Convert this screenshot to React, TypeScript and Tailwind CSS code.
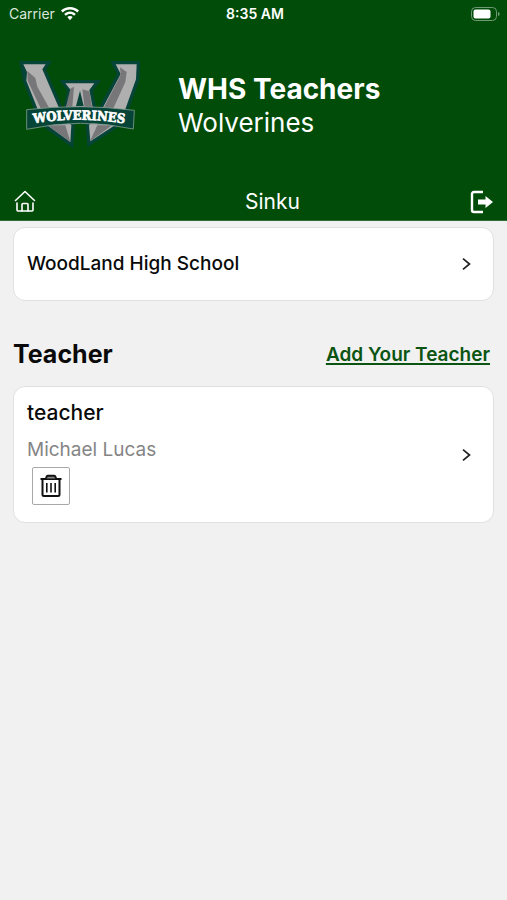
import type { ReactNode } from "react";

function WifiIcon() {
  return (
    <svg viewBox="0 0 18 14" className="h-[14px] w-[18px]" fill="#fff" aria-hidden="true">
      <path d="M9 0C5.500 0 2.400 1.300 0 3.600L1.700 5.400C3.600 3.500 6.200 2.500 9 2.500s5.400 1 7.300 2.900L18 3.600C15.600 1.300 12.500 0 9 0Z" />
      <path d="M9 4.500c-2.300 0-4.300.9-5.800 2.400l1.700 1.800C6 7.600 7.400 7 9 7s3 .6 4.100 1.700l1.700-1.800C13.300 5.400 11.300 4.500 9 4.500Z" />
      <path d="M9 9c-1.100 0-2 .4-2.700 1.100L9 13.300l2.700-3.200C11 9.400 10.100 9 9 9Z" />
    </svg>
  );
}

function BatteryIcon() {
  return (
    <svg viewBox="0 0 31 16" className="h-4 w-[31px]" fill="none" aria-hidden="true">
      <rect x="1.500" y="1.500" width="25" height="13" rx="4" stroke="#6f9a74" />
      <rect x="3.500" y="3.500" width="17" height="9" rx="2" fill="#fff" />
      <path d="M28 6c1.200.3 1.600 1 1.600 2s-.4 1.700-1.600 2Z" fill="#6f9a74" />
    </svg>
  );
}

function WolverinesLogo() {
  return (
    <svg viewBox="0 0 420 315" className="h-[105px] w-[140px]" role="img" aria-label="Wolverines">
      {/* outline behind the letter */}
      <g fill="#064438" stroke="#064438" strokeWidth="20" strokeLinejoin="miter">
        <path d="M40 43H107L97 58L148 176L184 226L181 276L112 226L84 180L49 92Z" />
        <path d="M317 43H380L378 88L333 214L241 274L237 226L280 170L332 72Z" />
        <path d="M168 100H253L238 120L250 182H169L182 120Z" />
      </g>

      <path fill="#b0afb0" d="M40 43H107L97 58L148 176L184 226L181 276L112 226L84 180L49 92L51 66Z" />
      <path fill="#777678" d="M52 63L76 84L82 110L121 180L96 184L53 92Z" />
      <path fill="#777678" d="M113 226L181 276L166 226Z" />
      <path fill="#b0afb0" d="M317 43H380L378 88L333 214L241 274L237 226L280 170L332 72Z" />
      <path fill="#777678" d="M330 52L350 66L346 96L306 184H276L332 74Z" />
      <path fill="#777678" d="M240 274L262 226H306Z" />
      <path fill="#b0afb0" d="M166 100H253L238 120L250 182H169L182 120Z" />
      <path fill="#777678" d="M181 116L192 110L186 182H165Z" />
      <path fill="#777678" d="M217 118L238 124L248 182H225Z" />
      <path fill="#064438" d="M210 122L221 168H198Z" />
      <path fill="#004c08" d="M200 228H220L211 250Z" />

      <path
        fill="#064438"
        stroke="#7e9a8c"
        strokeWidth="2.500"
        d="M50 179Q212 160 373 181L370 237Q212 202 50 238Z"
      />
      <path id="banner" d="M71 220Q212 196 372 225" fill="none" />
      <text
        fill="#fff"
        stroke="#fff"
        strokeWidth="2"
        className="font-['DejaVu_Serif_Condensed','DejaVu_Serif',serif] text-[39px] font-bold"
      >
        <textPath href="#banner">WOLVERINES</textPath>
      </text>
    </svg>
  );
}

function HomeIcon() {
  return (
    <svg
      viewBox="0 0 22 24"
      className="h-6 w-[22px]"
      fill="none"
      stroke="#fff"
      strokeWidth="1.600"
      strokeLinecap="round"
      strokeLinejoin="round"
      aria-hidden="true"
    >
      <path d="M1.500 10.500L11 1.500L20.500 10.500" />
      <path d="M3 13V20Q3 21 4 21H18Q19 21 19 20V13" />
      <path d="M8 21V14.500Q8 13.500 9 13.500H13Q14 13.500 14 14.500V21" />
    </svg>
  );
}

function LogoutIcon() {
  return (
    <svg viewBox="0 0 24 24" className="size-6" fill="none" aria-hidden="true">
      <path
        d="M14 2H5Q3 2 3 4V20Q3 22 5 22H14"
        stroke="#fff"
        strokeWidth="2.400"
      />
      <path d="M9 9.500H16.500V6L24 12L16.500 18V14.500H9Z" fill="#fff" />
    </svg>
  );
}

function ChevronIcon() {
  return (
    <svg
      viewBox="0 0 10 14"
      className="h-[14px] w-[10px]"
      fill="none"
      stroke="#222"
      strokeWidth="1.700"
      aria-hidden="true"
    >
      <path d="M2 1.700L8.500 7L2 12.300" />
    </svg>
  );
}

function TrashIcon() {
  return (
    <svg
      viewBox="0 0 22 24"
      className="h-6 w-[22px]"
      fill="none"
      stroke="#111"
      strokeWidth="2"
      strokeLinejoin="round"
      aria-hidden="true"
    >
      <path d="M0.500 5H21.500" />
      <path d="M6 4.500L6.600 2.500Q6.800 1.700 7.800 1.700H14.200Q15.200 1.700 15.400 2.500L16 4.500" fill="#888" />
      <path d="M2.500 5V20.500Q2.500 22 4 22H18Q19.500 22 19.500 20.500V5" />
      <path d="M6.800 9V18.500M11 9V18.500M15.200 9V18.500" strokeWidth="1.600" />
    </svg>
  );
}

function Card({ children }: { children: ReactNode }) {
  return (
    <div className="flex items-center justify-between rounded-xl border border-[#e0e0e0] bg-white pr-[22px] pl-[13px]">
      {children}
    </div>
  );
}

export default function App() {
  return (
    <div className="min-h-dvh w-full bg-[#f1f1f1] font-['Inter',sans-serif] text-[#0a0a0a]">
      <header className="border-b border-[#2f6b35] bg-[#004c08] text-white">
        <div className="grid h-[27px] grid-cols-3 items-center pr-[6px] pl-[9px] text-[14px]">
          <div className="flex items-center gap-[6px] text-[#dbe6dc]">
            <span>Carrier</span>
            <WifiIcon />
          </div>
          <span className="text-center font-semibold">8:35 AM</span>
          <div className="flex justify-end">
            <BatteryIcon />
          </div>
        </div>

        <div className="flex items-center gap-7 px-[10px] pt-[23px]">
          <WolverinesLogo />
          <div className="pt-1">
            <h1 className="text-[28px] leading-9 font-bold">WHS Teachers</h1>
            <p className="text-[26px] leading-8">Wolverines</p>
          </div>
        </div>

        <nav className="mt-[30px] flex items-center px-[14px] pb-[1px]">
          <button aria-label="Home">
            <HomeIcon />
          </button>
          <span className="flex-1 pl-10 text-center text-[21px] leading-[34px]">Sinku</span>
          <button aria-label="Log out">
            <LogoutIcon />
          </button>
        </nav>
      </header>

      <main className="px-[13px] pt-[6px]">
        <Card>
          <span className="py-5 text-[19px] leading-8 font-medium">WoodLand High School</span>
          <button aria-label="Open school">
            <ChevronIcon />
          </button>
        </Card>

        <div className="mt-9 mb-[15px] flex items-end justify-between pr-1">
          <h2 className="text-[25px] leading-[34px] font-bold">Teacher</h2>
          <a
            href="#add"
            className="text-[19px] leading-8 font-semibold text-[#0b5412] underline decoration-2 underline-offset-2"
          >
            Add Your Teacher
          </a>
        </div>

        <Card>
          <div className="pt-[10px] pb-[17px]">
            <h3 className="text-[21px] leading-8 font-medium">teacher</h3>
            <p className="mt-1 text-[19px] leading-[34px] text-[#858585]">Michael Lucas</p>
            <button
              aria-label="Delete teacher"
              className="ml-[5px] flex size-[38px] items-center justify-center rounded-xs border border-[#a8a8a8]"
            >
              <TrashIcon />
            </button>
          </div>
          <button aria-label="Open teacher">
            <ChevronIcon />
          </button>
        </Card>
      </main>
    </div>
  );
}
